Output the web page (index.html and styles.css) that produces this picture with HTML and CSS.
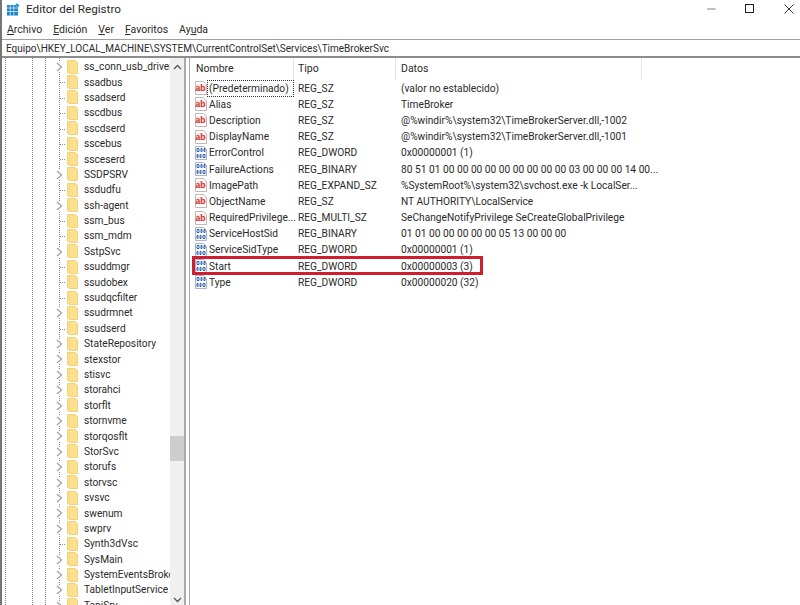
FILE: index.html
```html
<!DOCTYPE html>
<html lang="es">
<head>
<meta charset="utf-8">
<title>Editor del Registro</title>
<link rel="stylesheet" href="styles.css">
</head>
<body>
<svg class="defs" width="0" height="0" aria-hidden="true">
  <symbol id="folder" viewBox="0 0 11 14">
    <path d="M0.5 0.500H8L10.500 2.500V13.500H2.500L0.500 12.500Z" fill="#fde08e" stroke="#f0d27c"/>
    <path d="M2.500 2.500V13.500" stroke="#f6da86" fill="none"/>
  </symbol>
  <symbol id="chev" viewBox="0 0 7 10">
    <path d="M1 1L5.500 5L1 9" fill="none" stroke="#a6a6a6" stroke-width="1.400"/>
  </symbol>
  <symbol id="ab" viewBox="0 0 12 14">
    <path d="M0.500 0.500H8.500L11.500 3.500V13.500H0.500Z" fill="#fff" stroke="#c9b4b4"/>
    <rect x="1" y="3" width="10" height="7.500" fill="#fbeaea"/>
    <text x="0.600" y="9.700" class="abtxt">ab</text>
  </symbol>
  <symbol id="bin" viewBox="0 0 12 14">
    <path d="M0.500 0.500H8.500L11.500 3.500V13.500H0.500Z" fill="#fff" stroke="#a9b4c9"/>
    <path d="M2 2.500h2v3h-2zM6 2.500h1v3h-1zM9 2.500h1v3h-1zM2 8.500h1v3h-1zM5 8.500h1v3h-1zM8 8.500h2v3h-2z" fill="none" stroke="#2f62ad" stroke-width="1"/>
  </symbol>
</svg>
<div class="window">
  <header class="titlebar">
    <svg class="appicon" viewBox="0 0 13 13" width="13" height="13" aria-hidden="true">
      <path d="M0 2H9V4H11V12.500H0Z" fill="#1d82c8"/>
      <path d="M0 5H11M0 8.500H11M3.300 2V12.500M6.800 2V12.500" stroke="#d3ecfa" stroke-width=".8"/>
      <path d="M9.500 0.300L12.700 2.300L10.500 4.600L8 2.600Z" fill="#2a9bd8"/>
    </svg>
    <span class="wintitle">Editor del Registro</span>
    <div class="caption">
      <svg viewBox="0 0 10 10" width="10" height="10" aria-hidden="true"><path d="M1 5H9.500" stroke="#808080" fill="none"/></svg>
      <svg viewBox="0 0 10 10" width="10" height="10" aria-hidden="true"><rect x=".5" y=".5" width="8" height="8" fill="none" stroke="#222"/></svg>
      <svg viewBox="0 0 10 10" width="10" height="10" aria-hidden="true"><path d="M.5 .5L9.500 9.500M9.500 .5L.5 9.500" stroke="#333" fill="none"/></svg>
    </div>
  </header>
  <nav class="menubar">
    <span><u>A</u>rchivo</span>
    <span><u>E</u>dición</span>
    <span><u>V</u>er</span>
    <span><u>F</u>avoritos</span>
    <span>Ay<u>u</u>da</span>
  </nav>
  <div class="address">Equipo\HKEY_LOCAL_MACHINE\SYSTEM\CurrentControlSet\Services\TimeBrokerSvc</div>
  <main class="panes">
    <section class="tree">
      <div class="treelist">
        <div class="node"><svg class="chev"><use href="#chev"/></svg><svg class="folder"><use href="#folder"/></svg><span>ss_conn_usb_driver</span></div>
        <div class="node leaf"><svg class="folder"><use href="#folder"/></svg><span>ssadbus</span></div>
        <div class="node leaf"><svg class="folder"><use href="#folder"/></svg><span>ssadserd</span></div>
        <div class="node leaf"><svg class="folder"><use href="#folder"/></svg><span>sscdbus</span></div>
        <div class="node leaf"><svg class="folder"><use href="#folder"/></svg><span>sscdserd</span></div>
        <div class="node leaf"><svg class="folder"><use href="#folder"/></svg><span>sscebus</span></div>
        <div class="node leaf"><svg class="folder"><use href="#folder"/></svg><span>ssceserd</span></div>
        <div class="node"><svg class="chev"><use href="#chev"/></svg><svg class="folder"><use href="#folder"/></svg><span>SSDPSRV</span></div>
        <div class="node leaf"><svg class="folder"><use href="#folder"/></svg><span>ssdudfu</span></div>
        <div class="node"><svg class="chev"><use href="#chev"/></svg><svg class="folder"><use href="#folder"/></svg><span>ssh-agent</span></div>
        <div class="node leaf"><svg class="folder"><use href="#folder"/></svg><span>ssm_bus</span></div>
        <div class="node leaf"><svg class="folder"><use href="#folder"/></svg><span>ssm_mdm</span></div>
        <div class="node"><svg class="chev"><use href="#chev"/></svg><svg class="folder"><use href="#folder"/></svg><span>SstpSvc</span></div>
        <div class="node leaf"><svg class="folder"><use href="#folder"/></svg><span>ssuddmgr</span></div>
        <div class="node leaf"><svg class="folder"><use href="#folder"/></svg><span>ssudobex</span></div>
        <div class="node leaf"><svg class="folder"><use href="#folder"/></svg><span>ssudqcfilter</span></div>
        <div class="node"><svg class="chev"><use href="#chev"/></svg><svg class="folder"><use href="#folder"/></svg><span>ssudrmnet</span></div>
        <div class="node leaf"><svg class="folder"><use href="#folder"/></svg><span>ssudserd</span></div>
        <div class="node"><svg class="chev"><use href="#chev"/></svg><svg class="folder"><use href="#folder"/></svg><span>StateRepository</span></div>
        <div class="node"><svg class="chev"><use href="#chev"/></svg><svg class="folder"><use href="#folder"/></svg><span>stexstor</span></div>
        <div class="node"><svg class="chev"><use href="#chev"/></svg><svg class="folder"><use href="#folder"/></svg><span>stisvc</span></div>
        <div class="node"><svg class="chev"><use href="#chev"/></svg><svg class="folder"><use href="#folder"/></svg><span>storahci</span></div>
        <div class="node"><svg class="chev"><use href="#chev"/></svg><svg class="folder"><use href="#folder"/></svg><span>storflt</span></div>
        <div class="node"><svg class="chev"><use href="#chev"/></svg><svg class="folder"><use href="#folder"/></svg><span>stornvme</span></div>
        <div class="node"><svg class="chev"><use href="#chev"/></svg><svg class="folder"><use href="#folder"/></svg><span>storqosflt</span></div>
        <div class="node"><svg class="chev"><use href="#chev"/></svg><svg class="folder"><use href="#folder"/></svg><span>StorSvc</span></div>
        <div class="node"><svg class="chev"><use href="#chev"/></svg><svg class="folder"><use href="#folder"/></svg><span>storufs</span></div>
        <div class="node"><svg class="chev"><use href="#chev"/></svg><svg class="folder"><use href="#folder"/></svg><span>storvsc</span></div>
        <div class="node"><svg class="chev"><use href="#chev"/></svg><svg class="folder"><use href="#folder"/></svg><span>svsvc</span></div>
        <div class="node"><svg class="chev"><use href="#chev"/></svg><svg class="folder"><use href="#folder"/></svg><span>swenum</span></div>
        <div class="node"><svg class="chev"><use href="#chev"/></svg><svg class="folder"><use href="#folder"/></svg><span>swprv</span></div>
        <div class="node leaf"><svg class="folder"><use href="#folder"/></svg><span>Synth3dVsc</span></div>
        <div class="node"><svg class="chev"><use href="#chev"/></svg><svg class="folder"><use href="#folder"/></svg><span>SysMain</span></div>
        <div class="node"><svg class="chev"><use href="#chev"/></svg><svg class="folder"><use href="#folder"/></svg><span>SystemEventsBroker</span></div>
        <div class="node"><svg class="chev"><use href="#chev"/></svg><svg class="folder"><use href="#folder"/></svg><span>TabletInputService</span></div>
        <div class="node"><svg class="chev"><use href="#chev"/></svg><svg class="folder"><use href="#folder"/></svg><span>TapiSrv</span></div>
      </div>
      <div class="scrollbar">
        <svg class="arrow" viewBox="0 0 9 6" width="9" height="6" aria-hidden="true"><path d="M1 5L4.500 1.500L8 5" fill="none" stroke="#555" stroke-width="1.300"/></svg>
        <div class="track"><div class="thumb"></div></div>
        <svg class="arrow" viewBox="0 0 9 6" width="9" height="6" aria-hidden="true"><path d="M1 1L4.500 4.500L8 1" fill="none" stroke="#555" stroke-width="1.300"/></svg>
      </div>
    </section>
    <div class="splitter"></div>
    <section class="values">
      <div class="colhead">
        <div>Nombre</div><div>Tipo</div><div>Datos</div>
      </div>
      <div class="vrow"><svg class="vicon"><use href="#ab"/></svg><span class="vname focus">(Predeterminado)</span><span>REG_SZ</span><span>(valor no establecido)</span></div>
      <div class="vrow"><svg class="vicon"><use href="#ab"/></svg><span class="vname">Alias</span><span>REG_SZ</span><span>TimeBroker</span></div>
      <div class="vrow"><svg class="vicon"><use href="#ab"/></svg><span class="vname">Description</span><span>REG_SZ</span><span>@%windir%\system32\TimeBrokerServer.dll,-1002</span></div>
      <div class="vrow"><svg class="vicon"><use href="#ab"/></svg><span class="vname">DisplayName</span><span>REG_SZ</span><span>@%windir%\system32\TimeBrokerServer.dll,-1001</span></div>
      <div class="vrow"><svg class="vicon"><use href="#bin"/></svg><span class="vname">ErrorControl</span><span>REG_DWORD</span><span>0x00000001 (1)</span></div>
      <div class="vrow"><svg class="vicon"><use href="#bin"/></svg><span class="vname">FailureActions</span><span>REG_BINARY</span><span>80 51 01 00 00 00 00 00 00 00 00 00 03 00 00 00 14 00...</span></div>
      <div class="vrow"><svg class="vicon"><use href="#ab"/></svg><span class="vname">ImagePath</span><span>REG_EXPAND_SZ</span><span>%SystemRoot%\system32\svchost.exe -k LocalSer...</span></div>
      <div class="vrow"><svg class="vicon"><use href="#ab"/></svg><span class="vname">ObjectName</span><span>REG_SZ</span><span>NT AUTHORITY\LocalService</span></div>
      <div class="vrow"><svg class="vicon"><use href="#ab"/></svg><span class="vname">RequiredPrivilege...</span><span>REG_MULTI_SZ</span><span>SeChangeNotifyPrivilege SeCreateGlobalPrivilege</span></div>
      <div class="vrow"><svg class="vicon"><use href="#bin"/></svg><span class="vname">ServiceHostSid</span><span>REG_BINARY</span><span>01 01 00 00 00 00 00 05 13 00 00 00</span></div>
      <div class="vrow"><svg class="vicon"><use href="#bin"/></svg><span class="vname">ServiceSidType</span><span>REG_DWORD</span><span>0x00000001 (1)</span></div>
      <div class="vrow marked"><svg class="vicon"><use href="#bin"/></svg><span class="vname">Start</span><span>REG_DWORD</span><span>0x00000003 (3)</span></div>
      <div class="vrow"><svg class="vicon"><use href="#bin"/></svg><span class="vname">Type</span><span>REG_DWORD</span><span>0x00000020 (32)</span></div>
    </section>
  </main>
</div>
</body>
</html>
```
FILE: styles.css
```css
* { box-sizing: border-box; }
html, body { margin: 0; height: 100%; overflow: hidden; background: #fff; }
body { font-family: Roboto, "Noto Sans", sans-serif; font-size: 10.2px; color: #2a2a2a; }
.defs { position: absolute; }
.abtxt { font-family: "Liberation Sans", sans-serif; font-size: 8.5px; font-weight: 700; fill: #c93030; }

.window { height: 605px; display: flex; flex-direction: column; border-left: 2px solid #767676; }

.titlebar { height: 18px; display: flex; align-items: center; padding-left: 5px; }
.appicon { margin-right: 6px; flex: none; }
.wintitle { font-size: 11.7px; }
.caption { margin-left: auto; display: flex; gap: 29px; padding-right: 6px; }

.menubar { height: 21px; padding: 4px 0 0 5px; display: flex; gap: 11px; font-size: 10.5px; }
.menubar span { line-height: 15px; }
.address { height: 19px; border-top: 1px solid #a0a0a0; border-bottom: 2px solid #8c8c8c; padding-left: 4px; line-height: 17px; font-size: 10px; white-space: nowrap; }

.panes { flex: 1; min-height: 0; display: flex; }

.tree { width: 182px; flex: none; display: flex; overflow: hidden;
  background-image:
    repeating-linear-gradient(#8a8a8a 0 1px, transparent 1px 2px),
    repeating-linear-gradient(#8a8a8a 0 1px, transparent 1px 2px),
    repeating-linear-gradient(#8a8a8a 0 1px, transparent 1px 2px),
    repeating-linear-gradient(#8a8a8a 0 1px, transparent 1px 2px);
  background-size: 1px 100%;
  background-repeat: no-repeat;
  background-position: 3px 0, 30px 0, 43px 0, 57px 0; }
.treelist { width: 168px; flex: none; overflow: hidden; padding-top: 1px; }
.node { height: 15.4px; display: flex; align-items: center; padding-left: 65px; position: relative; white-space: nowrap; }
.node .folder { width: 11px; height: 14px; flex: none; margin-right: 6px; }
.node .chev { width: 7px; height: 10px; position: absolute; left: 54px; top: 3px; background: #fff; }
.node.leaf::before { content: ""; position: absolute; left: 58px; top: 8px; width: 6px; height: 1px; background-image: repeating-linear-gradient(90deg, #8a8a8a 0 1px, transparent 1px 2px); }

.scrollbar { width: 14px; flex: none; background: #f0f0f0; display: flex; flex-direction: column; align-items: center; padding: 6px 0 2px; }
.arrow { flex: none; }
.track { flex: 1; width: 100%; padding-top: 366px; }
.thumb { height: 25px; background: #cdcdcd; }

.splitter { width: 6px; flex: none; border-left: 2px solid #a8a8a8; border-right: 1px solid #a8a8a8; }

.values { flex: 1; min-width: 0; }
.colhead { height: 22px; display: grid; grid-template-columns: 104px 102px 246px; line-height: 22px; font-size: 10.5px; }
.colhead div { padding-left: 5px; border-right: 1px solid #e5e5e5; }
.colhead div:first-child { padding-left: 6px; }
.colhead div:nth-child(2) { padding-left: 4px; }
.vrow { height: 16.2px; display: grid; grid-template-columns: 18px 90px 103px 1fr; align-items: center; white-space: nowrap; position: relative; line-height: 15px; }
.vicon { width: 12px; height: 14px; margin-left: 5px; }
.vname { padding-left: 1px; }
.focus { outline: 1px dotted #333; margin-right: 5px; }
.marked::after { content: ""; box-sizing: border-box; position: absolute; left: 2px; top: -2px; width: 291px; height: 19px; border: 3px solid #cf1f2e; }
```
